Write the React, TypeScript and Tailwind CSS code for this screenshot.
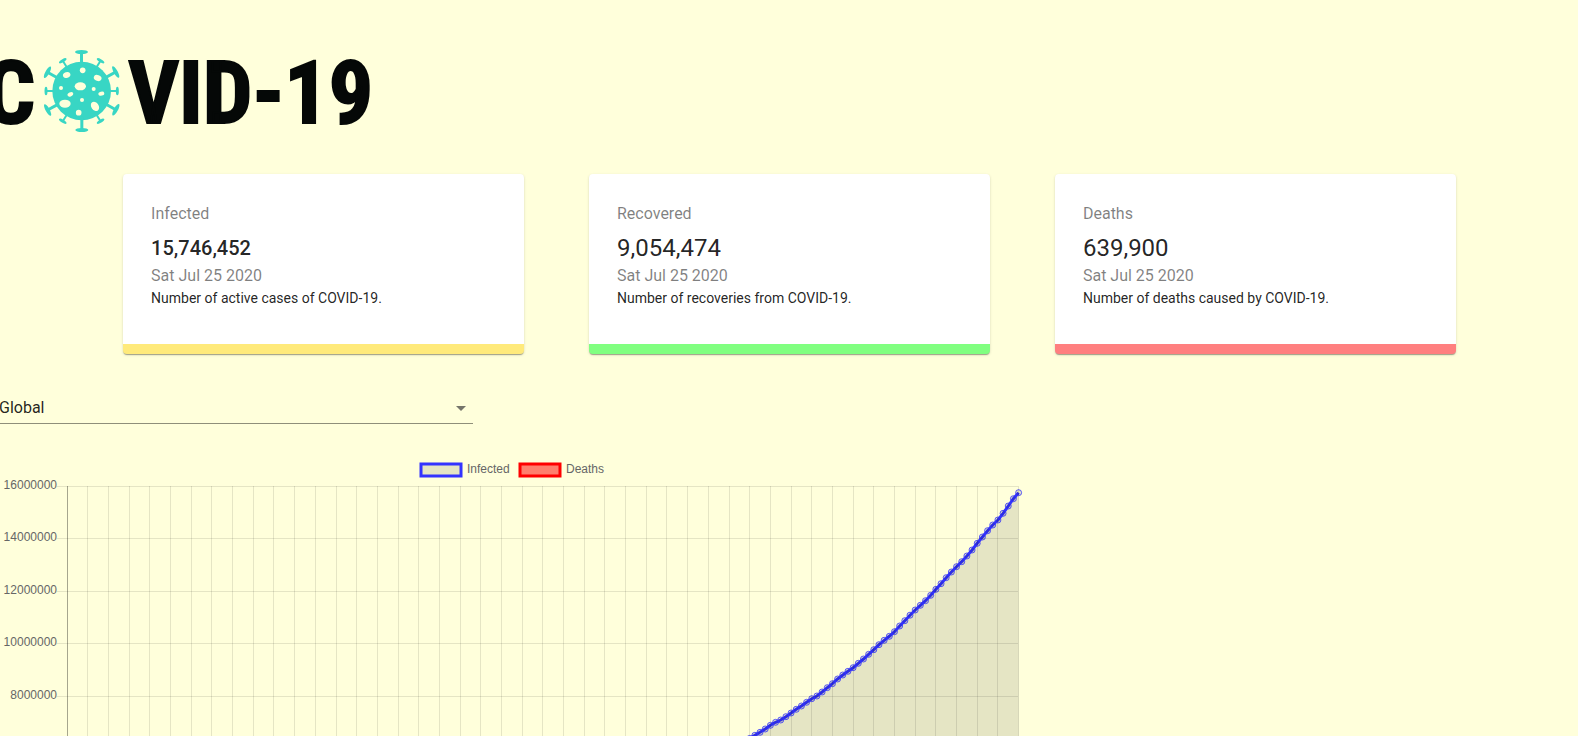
const cards = [
  { title: 'Infected', value: '15,746,452', text: 'Number of active cases of COVID-19.', border: 'border-[#ffea7b]', number: 'text-xl font-medium' },
  { title: 'Recovered', value: '9,054,474', text: 'Number of recoveries from COVID-19.', border: 'border-[#80ff80]', number: 'text-2xl' },
  { title: 'Deaths', value: '639,900', text: 'Number of deaths caused by COVID-19.', border: 'border-[#ff7f7f]', number: 'text-2xl' },
];

function Virus() {
  const small = [32, 90, 148, 212, 270, 328];
  const large = [0, 61, 119, 180, 241, 299];
  return (
    <svg viewBox="129 27 231 252" className="h-[84px] w-[77px] shrink-0" fill="#38d6c4" role="img" aria-label="O">
      <circle cx="245" cy="153" r="88" />
      {large.map((a) => (
        <g key={a} transform={`rotate(${a} 245 153)`}>
          <rect x="240" y="36" width="9" height="40" />
          <ellipse cx="244.500" cy="36" rx="19.500" ry="6" />
        </g>
      ))}
      {small.map((a) => (
        <g key={a} transform={`rotate(${a} 245 153)`}>
          <rect x="242" y="46" width="6" height="30" />
          <ellipse cx="245" cy="46" rx="13" ry="4.500" />
        </g>
      ))}
      <g fill="#ffffdb">
        <ellipse cx="200" cy="105" rx="11.500" ry="8.500" transform="rotate(-20 200 105)" />
        <circle cx="248" cy="91" r="8.500" />
        <ellipse cx="293" cy="114" rx="12" ry="8.500" transform="rotate(20 293 114)" />
        <ellipse cx="241" cy="139" rx="17" ry="12" />
        <circle cx="183" cy="144" r="6" />
        <circle cx="281" cy="147" r="6" />
        <ellipse cx="211" cy="163" rx="9" ry="6" transform="rotate(-25 211 163)" />
        <ellipse cx="304" cy="161" rx="9" ry="6" transform="rotate(-15 304 161)" />
        <circle cx="246" cy="180" r="6" />
        <ellipse cx="195" cy="191" rx="17" ry="12" />
        <ellipse cx="285" cy="199" rx="11" ry="15" transform="rotate(-35 285 199)" />
        <circle cx="236" cy="218" r="8.500" />
      </g>
    </svg>
  );
}

// Height of each daily point in the plot, newest first.
const heights = [
  492.7, 498.7, 506, 513.3, 520, 525, 530.7, 537, 543.3, 550, 556, 561.7, 566.7, 572, 577.7, 583.7, 589.3, 595.3, 600.7, 605.3,
  610, 615.2, 620.7, 626, 631.7, 636.3, 640.3, 644.7, 649.7, 654.3, 659, 663.3, 667.7, 671.3, 675, 679, 683.7, 687.7, 692, 696,
  698.7, 702.3, 706, 709.3, 713, 716.7, 720, 722.3, 725.3, 729, 732.3, 735.3, 738.4, 741.6, 745, 748, 751, 753.5, 756, 759,
];
const points = heights.map((y, i) => [1018.6 - i * 5.171, y - 454]);
const line = points.map(([x, y]) => `${x.toFixed(1)},${y.toFixed(1)}`).join(' ');
const columns = Array.from({ length: 47 }, (_, i) => Math.floor(67.1 + i * 20.685) + 0.5);
const rows = [
  [32.5, '16000000'],
  [84.5, '14000000'],
  [137.5, '12000000'],
  [189.5, '10000000'],
  [242.5, '8000000'],
] as const;

function Chart() {
  return (
    <svg viewBox="0 0 1024 300" className="h-auto w-[1024px] max-w-full font-['Liberation_Sans',Arial,sans-serif] text-xs" role="img" aria-label="Infected and deaths over time">
      <g strokeWidth="3">
        <rect x="421" y="10" width="40" height="12" fill="rgba(0,0,0,0.1)" stroke="#3333ff" />
        <rect x="520" y="10" width="40" height="12" fill="rgba(255,0,0,0.5)" stroke="#ff0000" />
      </g>
      <g fill="#666666">
        <text x="467" y="19">Infected</text>
        <text x="566" y="19">Deaths</text>
        {rows.map(([y, label]) => (
          <text key={label} x="57" y={y + 2.5} textAnchor="end">{label}</text>
        ))}
      </g>
      <polygon points={`1018.6,300 ${line} 713.500,300`} fill="rgba(0,0,0,0.1)" />
      <polyline points={line} fill="none" stroke="#3333ff" strokeWidth="3" />
      <g fill="rgba(0,0,0,0.1)" stroke="#3333ff" strokeOpacity="0.8">
        {points.map(([x, y]) => (
          <circle key={x} cx={x} cy={y} r="3" />
        ))}
      </g>
      <g stroke="rgba(0,0,0,0.1)">
        {rows.map(([y]) => (
          <line key={y} x1="57" x2="1018" y1={y} y2={y} />
        ))}
        {columns.map((x, i) => (
          <line key={x} x1={x} x2={x} y1="32" y2="300" stroke={i === 0 ? 'rgba(0,0,0,0.35)' : undefined} />
        ))}
      </g>
    </svg>
  );
}

export default function App() {
  return (
    <div className="flex h-screen flex-col overflow-hidden bg-[#ffffdb] font-[Roboto,sans-serif] text-black/87">
      <h1 className="flex h-[174px] shrink-0 items-center gap-2 pt-2 font-['Liberation_Sans_Narrow','Roboto_Condensed',Roboto,sans-serif] text-[88px] leading-none font-bold text-[#050807] [-webkit-text-stroke:2px_#050807]">
        <span className="-ml-[15px] pt-1">C</span>
        <Virus />
        <span className="pt-1">VID-19</span>
      </h1>
      <main>
        <div className="mr-[7.74%] ml-[7.8%] grid grid-cols-3 gap-[65px]">
          {cards.map((c) => (
            <section key={c.title} className={`rounded border-b-10 bg-white px-7 pt-7 pb-9 shadow-[0_2px_1px_-1px_rgba(0,0,0,0.2),0_1px_1px_0_rgba(0,0,0,0.14),0_1px_3px_0_rgba(0,0,0,0.12)] ${c.border}`}>
              <h2 className="mb-1.5 text-base text-black/50">{c.title}</h2>
              <p className={`leading-8 ${c.number}`}>{c.value}</p>
              <p className="text-base text-black/50">Sat Jul 25 2020</p>
              <p className="text-sm leading-5">{c.text}</p>
            </section>
          ))}
        </div>
        <div className="relative mt-[38px] w-[30%]">
          <select aria-label="Country" className="-ml-px block h-8 w-[calc(100%+1px)] appearance-none border-b border-[#8f8f7a] bg-transparent text-base outline-none">
            <option>Global</option>
          </select>
          <svg viewBox="0 0 10 5" className="pointer-events-none absolute top-3.5 right-[7px] h-[5px] w-[10px]" fill="#75756a">
            <path d="M0 0h10L5 5z" />
          </svg>
        </div>
        <div className="mt-[30px]">
          <Chart />
        </div>
      </main>
    </div>
  );
}
